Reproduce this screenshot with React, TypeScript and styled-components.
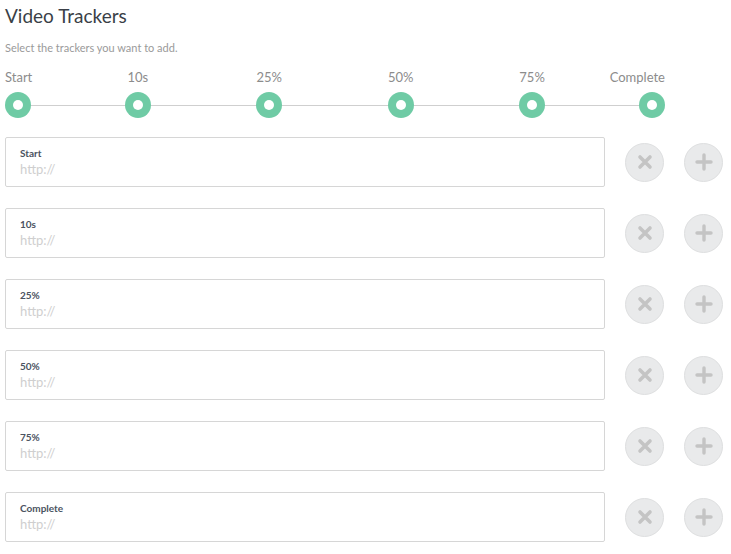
import React from 'react';
import styled, { createGlobalStyle } from 'styled-components';

const GlobalStyle = createGlobalStyle`
  body {
    margin: 0;
    background: #fff;
    font-family: Lato, "Open Sans", sans-serif;
  }
`;

const Page = styled.div`
  padding: 4px 5px 0 5px;
  width: 721px;
`;

const Title = styled.h1`
  margin: 0;
  font-size: 19px;
  font-weight: 400;
  color: #3a3f47;
  line-height: 24px;
`;

const Subtitle = styled.p`
  margin: 13px 0 0 0;
  font-size: 11px;
  color: #9a9a9a;
  line-height: 14px;
`;

const Track = styled.div`
  position: relative;
  width: 660px;
  margin-top: 14px;
  display: flex;
  justify-content: space-between;

  // connecting line behind the dots
  &::before {
    content: '';
    position: absolute;
    left: 13px;
    right: 13px;
    top: 36px;
    height: 1px;
    background: #cfcfcf;
  }
`;

const Step = styled.div<{ $align: 'start' | 'center' | 'end'; $w: number }>`
  width: ${p => p.$w}px;
  display: flex;
  flex-direction: column;
  align-items: ${p => (p.$align === 'start' ? 'flex-start' : p.$align === 'end' ? 'flex-end' : 'center')};
  position: relative;
  z-index: 1;
`;

const StepLabel = styled.span`
  font-size: 13px;
  color: #8c8c8c;
  line-height: 16px;
  white-space: nowrap;
`;

const Dot = styled.div`
  margin-top: 7px;
  width: 26px;
  height: 26px;
  border-radius: 50%;
  background: #6fcba5;
  display: flex;
  align-items: center;
  justify-content: center;

  &::after {
    content: '';
    width: 10px;
    height: 10px;
    border-radius: 50%;
    background: #fff;
  }
`;

const List = styled.div`
  margin-top: 19px;
  display: flex;
  flex-direction: column;
  gap: 21px;
`;

const Row = styled.div`
  display: flex;
  align-items: center;
  gap: 20px;
`;

const Field = styled.div`
  box-sizing: border-box;
  width: 600px;
  height: 50px;
  border: 1px solid #d6d6d6;
  border-radius: 2px;
  padding: 9px 14px 0 14px;
  display: flex;
  flex-direction: column;
`;

const FieldLabel = styled.label`
  font-size: 10px;
  font-weight: 700;
  color: #4b5361;
  line-height: 13px;
`;

const FieldInput = styled.input`
  border: none;
  outline: none;
  padding: 0;
  margin: 1px 0 0 0;
  font-family: inherit;
  font-size: 13px;
  line-height: 16px;
  color: #333;
  background: transparent;

  &::placeholder {
    color: #cfcfcf;
  }
`;

const RoundButton = styled.button`
  width: 39px;
  height: 39px;
  border-radius: 50%;
  border: 1px solid #dedfe0;
  background: #e9eaeb;
  padding: 0;
  display: flex;
  align-items: center;
  justify-content: center;
  cursor: pointer;
`;

const Buttons = styled.div`
  display: flex;
  gap: 20px;
`;

const RemoveIcon = () => (
  <svg width="16" height="16" viewBox="0 0 16 16">
    <path d="M3 3 L13 13 M13 3 L3 13" stroke="#c4c4c4" strokeWidth="3.6" strokeLinecap="round" />
  </svg>
);

const AddIcon = () => (
  <svg width="18" height="18" viewBox="0 0 18 18">
    <path d="M9 2 V16 M2 9 H16" stroke="#c4c4c4" strokeWidth="3.4" strokeLinecap="round" />
  </svg>
);

const steps = ['Start', '10s', '25%', '50%', '75%', 'Complete'];

const App = () => {
  return (
    <Page>
      <GlobalStyle />
      <Title>Video Trackers</Title>
      <Subtitle>Select the trackers you want to add.</Subtitle>
      <Track>
        {steps.map((s, i) => {
          const first = i === 0;
          const last = i === steps.length - 1;
          return (
            <Step key={s} $align={first ? 'start' : last ? 'end' : 'center'} $w={first || last ? 26 : 49}>
              <StepLabel>{s}</StepLabel>
              <Dot />
            </Step>
          );
        })}
      </Track>
      <List>
        {steps.map(s => (
          <Row key={s}>
            <Field>
              <FieldLabel>{s}</FieldLabel>
              <FieldInput placeholder="http://" />
            </Field>
            <Buttons>
              <RoundButton aria-label="Remove"><RemoveIcon /></RoundButton>
              <RoundButton aria-label="Add"><AddIcon /></RoundButton>
            </Buttons>
          </Row>
        ))}
      </List>
    </Page>
  );
};

export default App;
